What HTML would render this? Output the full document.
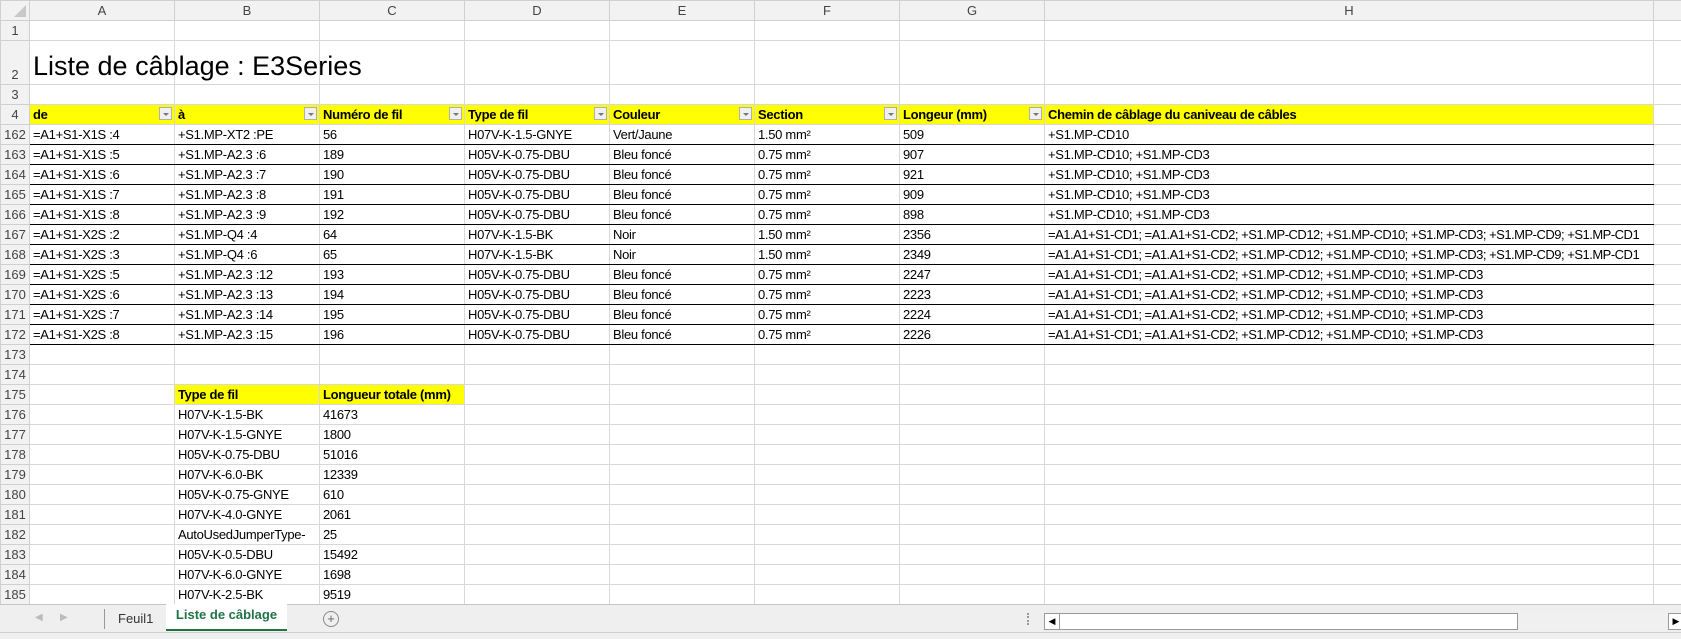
<!DOCTYPE html>
<html><head><meta charset="utf-8">
<style>
html,body{margin:0;padding:0;width:1681px;height:638px;overflow:hidden;background:#fff;font-family:"Liberation Sans",Arial,sans-serif;}
table{border-collapse:collapse;table-layout:fixed;position:absolute;left:0;top:0;width:1681px;}
td{border:1px solid #d8d8d8;padding:0 0 0 3px;font-size:13px;letter-spacing:-0.3px;white-space:nowrap;overflow:hidden;height:19px;line-height:19px;color:#000;position:relative;}
tr.h td{background:#f2f2f2;color:#444;text-align:center;padding:0;border-color:#d0d0d0;letter-spacing:0;}
td.n{background:#f2f2f2;color:#444;text-align:center;padding:0;font-size:13px;border-color:#d0d0d0;letter-spacing:0;}
tr.y td.c{background:#ffff00;font-weight:bold;border-top:1px solid #000;}
tr.d td.c{border-bottom:1px solid #000;}
td.ov{overflow:visible;}
.f{position:absolute;right:2px;top:2px;width:13px;height:13px;background:#f0f0f0;border:1px solid #b0b0b0;box-sizing:border-box;}
.f:after{content:"";position:absolute;left:3px;top:5px;border-left:3px solid transparent;border-right:3px solid transparent;border-top:3px solid #777;}
.yb{background:#ffff00;font-weight:bold;}
#tabs{position:absolute;left:0;top:604px;width:1681px;height:28px;background:#efefef;border-top:1px solid #c6c6c6;}
#bot{position:absolute;left:0;top:632px;width:1681px;height:6px;background:#f0f0f0;border-top:1px solid #d0d0d0;}
</style></head><body>
<table>
<colgroup><col style="width:29px"><col style="width:145px"><col style="width:145px"><col style="width:145px"><col style="width:145px"><col style="width:145px"><col style="width:145px"><col style="width:145px"><col style="width:609px"><col style="width:28px"></colgroup>
<tr class="h"><td style="position:relative"><div style="position:absolute;right:3px;bottom:3px;width:0;height:0;border-left:12px solid transparent;border-bottom:12px solid #c8c8c8"></div></td><td>A</td><td>B</td><td>C</td><td>D</td><td>E</td><td>F</td><td>G</td><td>H</td><td></td></tr>
<tr><td class="n">1</td><td></td><td></td><td></td><td></td><td></td><td></td><td></td><td></td><td></td></tr>
<tr style="height:41px"><td class="n" style="height:40px;vertical-align:bottom">2</td><td class="ov" style="height:40px;font-size:27px;letter-spacing:0;line-height:30px;vertical-align:bottom;padding-bottom:3px">Liste de câblage : E3Series</td><td></td><td></td><td></td><td></td><td></td><td></td><td></td><td></td></tr>
<tr><td class="n">3</td><td></td><td></td><td></td><td></td><td></td><td></td><td></td><td></td><td></td></tr>
<tr class="y"><td class="n">4</td><td class="c">de<span class="f"></span></td><td class="c">à<span class="f"></span></td><td class="c">Numéro de fil<span class="f"></span></td><td class="c">Type de fil<span class="f"></span></td><td class="c">Couleur<span class="f"></span></td><td class="c">Section<span class="f"></span></td><td class="c">Longeur (mm)<span class="f"></span></td><td class="c">Chemin de câblage du caniveau de câbles</td><td></td></tr>
<tr class="d"><td class="n">162</td><td class="c">=A1+S1-X1S :4</td><td class="c">+S1.MP-XT2 :PE</td><td class="c">56</td><td class="c">H07V-K-1.5-GNYE</td><td class="c">Vert/Jaune</td><td class="c">1.50 mm²</td><td class="c">509</td><td class="c">+S1.MP-CD10</td><td></td></tr>
<tr class="d"><td class="n">163</td><td class="c">=A1+S1-X1S :5</td><td class="c">+S1.MP-A2.3 :6</td><td class="c">189</td><td class="c">H05V-K-0.75-DBU</td><td class="c">Bleu foncé</td><td class="c">0.75 mm²</td><td class="c">907</td><td class="c">+S1.MP-CD10; +S1.MP-CD3</td><td></td></tr>
<tr class="d"><td class="n">164</td><td class="c">=A1+S1-X1S :6</td><td class="c">+S1.MP-A2.3 :7</td><td class="c">190</td><td class="c">H05V-K-0.75-DBU</td><td class="c">Bleu foncé</td><td class="c">0.75 mm²</td><td class="c">921</td><td class="c">+S1.MP-CD10; +S1.MP-CD3</td><td></td></tr>
<tr class="d"><td class="n">165</td><td class="c">=A1+S1-X1S :7</td><td class="c">+S1.MP-A2.3 :8</td><td class="c">191</td><td class="c">H05V-K-0.75-DBU</td><td class="c">Bleu foncé</td><td class="c">0.75 mm²</td><td class="c">909</td><td class="c">+S1.MP-CD10; +S1.MP-CD3</td><td></td></tr>
<tr class="d"><td class="n">166</td><td class="c">=A1+S1-X1S :8</td><td class="c">+S1.MP-A2.3 :9</td><td class="c">192</td><td class="c">H05V-K-0.75-DBU</td><td class="c">Bleu foncé</td><td class="c">0.75 mm²</td><td class="c">898</td><td class="c">+S1.MP-CD10; +S1.MP-CD3</td><td></td></tr>
<tr class="d"><td class="n">167</td><td class="c">=A1+S1-X2S :2</td><td class="c">+S1.MP-Q4 :4</td><td class="c">64</td><td class="c">H07V-K-1.5-BK</td><td class="c">Noir</td><td class="c">1.50 mm²</td><td class="c">2356</td><td class="c" style="letter-spacing:-0.5px">=A1.A1+S1-CD1; =A1.A1+S1-CD2; +S1.MP-CD12; +S1.MP-CD10; +S1.MP-CD3; +S1.MP-CD9; +S1.MP-CD1</td><td></td></tr>
<tr class="d"><td class="n">168</td><td class="c">=A1+S1-X2S :3</td><td class="c">+S1.MP-Q4 :6</td><td class="c">65</td><td class="c">H07V-K-1.5-BK</td><td class="c">Noir</td><td class="c">1.50 mm²</td><td class="c">2349</td><td class="c" style="letter-spacing:-0.5px">=A1.A1+S1-CD1; =A1.A1+S1-CD2; +S1.MP-CD12; +S1.MP-CD10; +S1.MP-CD3; +S1.MP-CD9; +S1.MP-CD1</td><td></td></tr>
<tr class="d"><td class="n">169</td><td class="c">=A1+S1-X2S :5</td><td class="c">+S1.MP-A2.3 :12</td><td class="c">193</td><td class="c">H05V-K-0.75-DBU</td><td class="c">Bleu foncé</td><td class="c">0.75 mm²</td><td class="c">2247</td><td class="c" style="letter-spacing:-0.5px">=A1.A1+S1-CD1; =A1.A1+S1-CD2; +S1.MP-CD12; +S1.MP-CD10; +S1.MP-CD3</td><td></td></tr>
<tr class="d"><td class="n">170</td><td class="c">=A1+S1-X2S :6</td><td class="c">+S1.MP-A2.3 :13</td><td class="c">194</td><td class="c">H05V-K-0.75-DBU</td><td class="c">Bleu foncé</td><td class="c">0.75 mm²</td><td class="c">2223</td><td class="c" style="letter-spacing:-0.5px">=A1.A1+S1-CD1; =A1.A1+S1-CD2; +S1.MP-CD12; +S1.MP-CD10; +S1.MP-CD3</td><td></td></tr>
<tr class="d"><td class="n">171</td><td class="c">=A1+S1-X2S :7</td><td class="c">+S1.MP-A2.3 :14</td><td class="c">195</td><td class="c">H05V-K-0.75-DBU</td><td class="c">Bleu foncé</td><td class="c">0.75 mm²</td><td class="c">2224</td><td class="c" style="letter-spacing:-0.5px">=A1.A1+S1-CD1; =A1.A1+S1-CD2; +S1.MP-CD12; +S1.MP-CD10; +S1.MP-CD3</td><td></td></tr>
<tr class="d"><td class="n">172</td><td class="c">=A1+S1-X2S :8</td><td class="c">+S1.MP-A2.3 :15</td><td class="c">196</td><td class="c">H05V-K-0.75-DBU</td><td class="c">Bleu foncé</td><td class="c">0.75 mm²</td><td class="c">2226</td><td class="c" style="letter-spacing:-0.5px">=A1.A1+S1-CD1; =A1.A1+S1-CD2; +S1.MP-CD12; +S1.MP-CD10; +S1.MP-CD3</td><td></td></tr>
<tr><td class="n">173</td><td></td><td></td><td></td><td></td><td></td><td></td><td></td><td></td><td></td></tr>
<tr><td class="n">174</td><td></td><td></td><td></td><td></td><td></td><td></td><td></td><td></td><td></td></tr>
<tr><td class="n">175</td><td></td><td class="yb">Type de fil</td><td class="yb">Longueur totale (mm)</td><td></td><td></td><td></td><td></td><td></td><td></td></tr>
<tr><td class="n">176</td><td></td><td>H07V-K-1.5-BK</td><td>41673</td><td></td><td></td><td></td><td></td><td></td><td></td></tr>
<tr><td class="n">177</td><td></td><td>H07V-K-1.5-GNYE</td><td>1800</td><td></td><td></td><td></td><td></td><td></td><td></td></tr>
<tr><td class="n">178</td><td></td><td>H05V-K-0.75-DBU</td><td>51016</td><td></td><td></td><td></td><td></td><td></td><td></td></tr>
<tr><td class="n">179</td><td></td><td>H07V-K-6.0-BK</td><td>12339</td><td></td><td></td><td></td><td></td><td></td><td></td></tr>
<tr><td class="n">180</td><td></td><td>H05V-K-0.75-GNYE</td><td>610</td><td></td><td></td><td></td><td></td><td></td><td></td></tr>
<tr><td class="n">181</td><td></td><td>H07V-K-4.0-GNYE</td><td>2061</td><td></td><td></td><td></td><td></td><td></td><td></td></tr>
<tr><td class="n">182</td><td></td><td>AutoUsedJumperType-</td><td>25</td><td></td><td></td><td></td><td></td><td></td><td></td></tr>
<tr><td class="n">183</td><td></td><td>H05V-K-0.5-DBU</td><td>15492</td><td></td><td></td><td></td><td></td><td></td><td></td></tr>
<tr><td class="n">184</td><td></td><td>H07V-K-6.0-GNYE</td><td>1698</td><td></td><td></td><td></td><td></td><td></td><td></td></tr>
<tr><td class="n">185</td><td></td><td>H07V-K-2.5-BK</td><td>9519</td><td></td><td></td><td></td><td></td><td></td><td></td></tr>
<tr><td class="n"></td><td></td><td></td><td></td><td></td><td></td><td></td><td></td><td></td><td></td></tr>
</table>
<div id="tabs">
  <span style="position:absolute;left:35px;top:7px;color:#bbb;font-size:10px">◀</span>
  <span style="position:absolute;left:60px;top:7px;color:#bbb;font-size:10px">▶</span>
  <div style="position:absolute;left:104px;top:4px;height:20px;border-left:1px solid #999"></div>
  <span style="position:absolute;left:118px;top:6px;font-size:13px;color:#333">Feuil1</span>
  <div style="position:absolute;left:166px;top:-1px;width:121px;height:25px;background:#fff;border-bottom:2px solid #217346;font-weight:bold;color:#217346;font-size:13px;text-align:center;line-height:22px">Liste de câblage</div>
  <div style="position:absolute;left:323px;top:6px;width:14px;height:14px;border:1px solid #888;border-radius:50%;color:#666;font-size:13px;line-height:14px;text-align:center">+</div>
  <div style="position:absolute;left:1027px;top:8px;width:2px;height:12px;border-left:2px dotted #999"></div>
  <div style="position:absolute;left:1044px;top:8px;width:636px;height:17px;background:#f0f0f0"></div>
  <div style="position:absolute;left:1044px;top:8px;width:472px;height:15px;background:#fff;border:1px solid #999"></div>
  <div style="position:absolute;left:1044px;top:8px;width:14px;height:15px;border:1px solid #999;background:#fff;font-size:9px;line-height:15px;text-align:center">◀</div>
  <div style="position:absolute;left:1668px;top:8px;width:14px;height:15px;border:1px solid #999;background:#fff;font-size:9px;line-height:15px;text-align:center">▶</div>
</div>
<div id="bot"></div>
</body></html>
